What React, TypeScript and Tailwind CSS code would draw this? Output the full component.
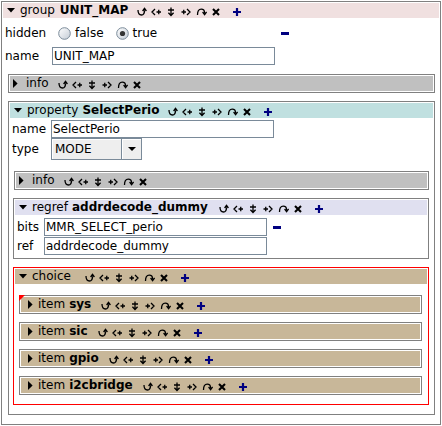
import React from "react";

function TriDown() {
  return (
    <svg width="8" height="5" viewBox="0 0 8 5" className="shrink-0">
      <polygon points="0,0 8,0 4,4.5" fill="#000" />
    </svg>
  );
}

function TriRight() {
  return (
    <svg width="5" height="9" viewBox="0 0 5 9" className="shrink-0">
      <polygon points="0,0 4.6,4.5 0,9" fill="#000" />
    </svg>
  );
}

const ICON_PATHS: { d: string; w: number }[] = [
  { d: "M3 5 Q3 10 6.5 10 Q9.5 10 9.5 5.2 M7.6 6 L9.5 3.4 L11.4 6", w: 1.3 },
  { d: "M5 4 L2 7 L5 10 M6.5 7 H11 M8.75 4.8 V9.2", w: 1.3 },
  { d: "M6 2.5 V10.5 M3 5 H9 M3.4 7.8 L6 10.5 L8.6 7.8", w: 1.3 },
  { d: "M1.5 7 H6 M3.75 4.8 V9.2 M7 4 L10 7 L7 10", w: 1.3 },
  { d: "M2.5 10 Q2.5 4.2 6.2 4.2 Q9.6 4.2 9.6 8 M7.6 7 L9.6 9.6 L11.6 7", w: 1.3 },
  { d: "M3 4 L9 10 M9 4 L3 10", w: 2.1 },
];

function Icons({ className, plus = true }: { className: string; plus?: boolean }) {
  return (
    <div className={`flex items-center gap-[3px] ${className}`}>
      {ICON_PATHS.map((p, i) => (
        <svg key={i} width="12" height="12" viewBox="0 0 12 12" className="shrink-0">
          <path d={p.d} fill="none" stroke="#000" strokeWidth={p.w} />
        </svg>
      ))}
      {plus && (
        <svg width="12" height="12" viewBox="0 0 12 12" className="ml-[6px] shrink-0">
          <path d="M2 7 H10 M6 3 V11" fill="none" stroke="#000080" strokeWidth="2.2" />
        </svg>
      )}
    </div>
  );
}

function Minus({ className }: { className: string }) {
  return <div className={`h-[3px] w-[8px] bg-[#000080] ${className}`} />;
}

function Radio({ checked, id }: { checked: boolean; id: string }) {
  return (
    <svg width="13" height="13" viewBox="0 0 13 13" className="shrink-0">
      <defs>
        <linearGradient id={id} x1="0" y1="0" x2="1" y2="1">
          <stop offset="0" stopColor="#ffffff" />
          <stop offset="1" stopColor="#c4ccd6" />
        </linearGradient>
      </defs>
      <circle cx="6.5" cy="6.5" r="5.8" fill={`url(#${id})`} stroke="#7a8a99" strokeWidth="1" />
      {checked && <circle cx="6.5" cy="6.5" r="2.6" fill="#333" />}
    </svg>
  );
}

function Input({ value }: { value: string }) {
  return (
    <div className="h-[18px] w-[223px] border border-[#7a8a99] bg-white pl-[1px] leading-[16px]">
      {value}
    </div>
  );
}

function Bar({
  fill,
  children,
  corner,
  className,
}: {
  fill: string;
  children: React.ReactNode;
  corner?: boolean;
  className: string;
}) {
  return (
    <div className={`relative border border-[#808080] bg-white p-[1px] ${className}`}>
      <div className={`flex h-[15px] items-center leading-[15px] ${fill}`}>{children}</div>
      {corner && (
        <svg width="6" height="6" viewBox="0 0 6 6" className="absolute left-[-1px] top-[-1px]">
          <polygon points="0,0 6,0 0,6" fill="#ff0000" />
        </svg>
      )}
    </div>
  );
}

function Item({ name, corner }: { name: string; corner?: boolean }) {
  return (
    <Bar fill="bg-[#c8b799] pl-[7px]" corner={corner} className="mt-[8px] first:mt-0">
      <TriRight />
      <span className="ml-[5px]">item </span>
      <span className="ml-[4px] font-bold">{name}</span>
      <Icons className="ml-[8px]" />
    </Bar>
  );
}

export default function App() {
  return (
    <div className="ml-[1px] mt-[1px] w-[440px] border border-[#808080] bg-white p-[1px] pb-[9px] font-['DejaVu_Sans',sans-serif] text-[12px] text-black">
      {/* group header */}
      <div className="flex h-[15px] items-center bg-[#f0e0e0] pl-[4px] leading-[15px]">
        <TriDown />
        <span className="ml-[5px]">group</span>
        <span className="ml-[5px] font-bold">UNIT_MAP</span>
        <Icons className="ml-[7px]" />
      </div>

      {/* hidden row */}
      <div className="mt-[5px] flex h-[20px] items-center pl-[2px] leading-[20px]">
        <div className="w-[47px]">hidden</div>
        <div className="flex w-[223px] items-center">
          <div className="ml-[6px]">
            <Radio checked={false} id="r1" />
          </div>
          <span className="ml-[4px]">false</span>
          <div className="ml-[12px]">
            <Radio checked={true} id="r2" />
          </div>
          <span className="ml-[4px]">true</span>
        </div>
        <Minus className="ml-[6px]" />
      </div>

      {/* name row */}
      <div className="mt-[4px] flex h-[18px] items-center pl-[2px] leading-[18px]">
        <div className="w-[47px]">name</div>
        <Input value="UNIT_MAP" />
      </div>

      {/* info */}
      <Bar fill="bg-[#c0c0c0] pl-[3px]" className="ml-[5px] mr-[4px] mt-[9px]">
        <TriRight />
        <span className="ml-[8px]">info</span>
        <Icons className="ml-[7px]" plus={false} />
      </Bar>

      {/* property */}
      <div className="ml-[5px] mr-[4px] mt-[8px] border border-[#808080] p-[1px] pb-[9px]">
        <div className="flex h-[15px] items-center bg-[#c0e0e0] pl-[4px] leading-[15px]">
          <TriDown />
          <span className="ml-[5px]">property</span>
          <span className="ml-[4px] font-bold">SelectPerio</span>
          <Icons className="ml-[7px]" />
        </div>

        <div className="mt-[2px] flex h-[18px] items-center pl-[2px] leading-[18px]">
          <div className="w-[39px]">name</div>
          <Input value="SelectPerio" />
        </div>

        <div className="flex h-[22px] items-center pl-[2px] leading-[20px]">
          <div className="w-[39px]">type</div>
          <div className="flex h-[22px] w-[91px] border border-[#7a8a99] bg-[#eeeeee]">
            <div className="flex-1 pl-[3px] leading-[20px] shadow-[inset_1px_1px_0_#ffffff]">MODE</div>
            <div className="flex w-[20px] items-center justify-center border-l border-[#7a8a99] bg-[#eeeeee] shadow-[inset_1px_1px_0_#ffffff]">
              <svg width="8" height="4" viewBox="0 0 8 4">
                <polygon points="0,0 8,0 4,4" fill="#000" />
              </svg>
            </div>
          </div>
        </div>

        <Bar fill="bg-[#c0c0c0] pl-[3px]" className="ml-[4px] mr-[4px] mt-[11px]">
          <TriRight />
          <span className="ml-[8px]">info</span>
          <Icons className="ml-[7px]" plus={false} />
        </Bar>

        {/* regref */}
        <div className="ml-[3px] mr-[4px] mt-[8px] border border-[#808080] p-[1px] pb-[3px]">
          <div className="flex h-[15px] items-center bg-[#e0e0f0] pl-[4px] leading-[15px]">
            <TriDown />
            <span className="ml-[5px]">regref</span>
            <span className="ml-[4px] font-bold">addrdecode_dummy</span>
            <Icons className="ml-[9px]" />
          </div>
          <div className="mt-[3px] flex h-[18px] items-center pl-[2px] leading-[18px]">
            <div className="w-[27px]">bits</div>
            <Input value="MMR_SELECT_perio" />
            <Minus className="ml-[6px]" />
          </div>
          <div className="mt-[1px] flex h-[18px] items-center pl-[2px] leading-[18px]">
            <div className="w-[27px]">ref</div>
            <Input value="addrdecode_dummy" />
          </div>
        </div>

        {/* choice */}
        <div className="ml-[3px] mr-[4px] mt-[8px] border border-[#ff0000] p-[1px] pb-[9px]">
          <div className="flex h-[15px] items-center bg-[#c8b799] pl-[4px] leading-[15px]">
            <TriDown />
            <span className="ml-[5px]">choice</span>
            <Icons className="ml-[12px]" />
          </div>
          <div className="ml-[4px] mr-[5px] mt-[11px] flex flex-col">
            <Item name="sys" corner />
            <Item name="sic" />
            <Item name="gpio" />
            <Item name="i2cbridge" />
          </div>
        </div>
      </div>
    </div>
  );
}
